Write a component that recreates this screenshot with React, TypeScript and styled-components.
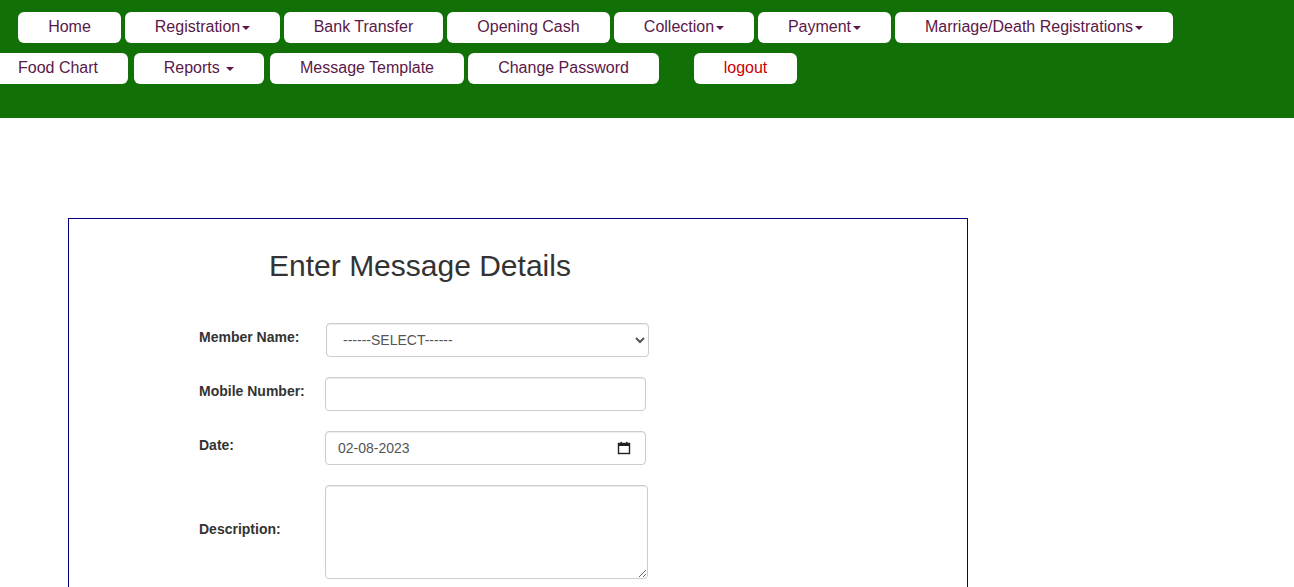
import styled, { createGlobalStyle } from "styled-components"

const GlobalStyle = createGlobalStyle`
  html, body {
    margin: 0;
    padding: 0;
    background: #fff;
    font-family: "Liberation Sans", Arial, Helvetica, sans-serif;
    font-size: 14px;
    color: #333;
    overflow: hidden;
  }
  * {
    box-sizing: border-box;
  }
`

interface NavItem {
  label: string
  width: number
  gap?: number
  dropdown?: boolean
  spaced?: boolean
  danger?: boolean
}

const firstRow: NavItem[] = [
  { label: "Home", width: 103 },
  { label: "Registration", width: 155, dropdown: true },
  { label: "Bank Transfer", width: 159 },
  { label: "Opening Cash", width: 163 },
  { label: "Collection", width: 140, dropdown: true },
  { label: "Payment", width: 133, dropdown: true },
  { label: "Marriage/Death Registrations", width: 278, dropdown: true },
]

const secondRow: NavItem[] = [
  { label: "Food Chart", width: 140 },
  { label: "Reports", width: 130, gap: 6, dropdown: true, spaced: true },
  { label: "Message Template", width: 194, gap: 6 },
  { label: "Change Password", width: 191 },
  { label: "logout", width: 103, gap: 35, danger: true },
]

function App() {
  return (
    <>
      <GlobalStyle />
      <Header>
        <NavRow $offset={18}>
          {firstRow.map((item) => (
            <NavButton key={item.label} $w={item.width} $gap={item.gap ?? 4} $danger={item.danger}>
              {item.label}
              {item.spaced && " "}
              {item.dropdown && <Caret />}
            </NavButton>
          ))}
        </NavRow>
        <NavRow $offset={-12}>
          {secondRow.map((item) => (
            <NavButton key={item.label} $w={item.width} $gap={item.gap ?? 4} $danger={item.danger}>
              {item.label}
              {item.spaced && " "}
              {item.dropdown && <Caret />}
            </NavButton>
          ))}
        </NavRow>
      </Header>

      <FormBox>
        <Title>Enter Message Details</Title>
        <FormGrid>
          <Label>Member Name:</Label>
          <Select defaultValue="">
            <option value="">------SELECT------</option>
          </Select>

          <Label>Mobile Number:</Label>
          <Input type="text" />

          <Label>Date:</Label>
          <DateField>
            <Input type="text" defaultValue="02-08-2023" readOnly />
            <CalendarIcon width="14" height="14" viewBox="0 0 14 14">
              <rect x="1.5" y="2.5" width="11" height="10" fill="none" stroke="#222" strokeWidth="1.4" />
              <rect x="1.5" y="2.5" width="11" height="2.5" fill="#222" />
              <rect x="3.5" y="0.8" width="1.4" height="2.5" fill="#222" />
              <rect x="9.1" y="0.8" width="1.4" height="2.5" fill="#222" />
            </CalendarIcon>
          </DateField>

          <Label>Description:</Label>
          <TextArea />
        </FormGrid>
      </FormBox>
    </>
  )
}

const Header = styled.div`
  background-color: #117006;
  height: 118px;
  padding-top: 12px;
  display: flex;
  flex-direction: column;
  gap: 10px;
  overflow: hidden;
`

const NavRow = styled.div<{ $offset: number }>`
  display: flex;
  margin-left: ${(p) => p.$offset}px;
`

const NavButton = styled.div<{ $w: number; $gap: number; $danger?: boolean }>`
  flex: none;
  width: ${(p) => p.$w}px;
  height: 31px;
  padding-bottom: 2px;
  margin-left: ${(p) => p.$gap}px;
  background: #fff;
  border-radius: 6px;
  display: flex;
  align-items: center;
  justify-content: center;
  font-size: 16px;
  color: ${(p) => (p.$danger ? "#cc0000" : "#5a1848")};
  white-space: pre;

  &:first-child {
    margin-left: 0;
  }
`

const Caret = styled.span`
  display: inline-block;
  width: 0;
  height: 0;
  margin-left: 2px;
  margin-top: 3px;
  border-top: 4px solid #5a1848;
  border-left: 4px solid transparent;
  border-right: 4px solid transparent;
`

const FormBox = styled.div`
  margin: 100px 0 0 68px;
  width: 900px;
  border: 1px solid #000080;
  padding-bottom: 60px;
`

const Title = styled.h2`
  width: 702px;
  margin: 0;
  padding-top: 30px;
  text-align: center;
  font-size: 30px;
  font-weight: 500;
  line-height: 33px;
  color: #333;
`

const FormGrid = styled.div`
  display: grid;
  grid-template-columns: 126px 323px;
  row-gap: 20px;
  align-items: center;
  margin: 41px 0 0 130px;
`

const Label = styled.label`
  display: inline-block;
  margin-bottom: 7px;
  font-size: 14px;
  font-weight: 700;
  color: #333;
`

const controlBase = `
  display: block;
  height: 34px;
  padding: 6px 12px;
  font-family: "Liberation Sans", Arial, Helvetica, sans-serif;
  font-size: 14px;
  color: #555;
  background: #fff;
  border: 1px solid #ccc;
  border-radius: 4px;
  box-shadow: inset 0 1px 1px rgba(0, 0, 0, 0.075);
  outline: none;
`

const Select = styled.select`
  ${controlBase}
  width: 323px;
  margin-left: 1px;
`

const Input = styled.input`
  ${controlBase}
  width: 321px;
`

const DateField = styled.div`
  position: relative;
  width: 321px;
`

const CalendarIcon = styled.svg`
  position: absolute;
  right: 15px;
  top: 10px;
`

const TextArea = styled.textarea`
  ${controlBase}
  width: 323px;
  height: 94px;
  resize: vertical;
`

export default App
